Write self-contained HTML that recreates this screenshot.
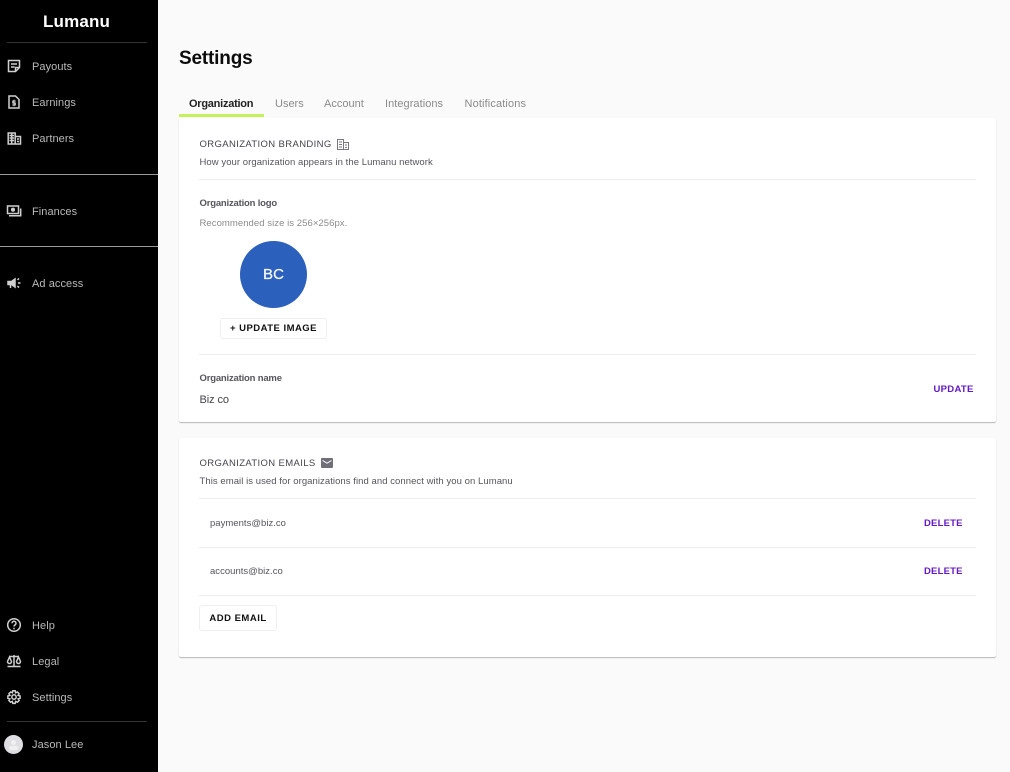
<!DOCTYPE html>
<html><head><meta charset="utf-8"><style>
html,body{margin:0;padding:0;width:1010px;height:772px;overflow:hidden;background:#fafafa}
body{position:relative;font-family:"Liberation Sans",sans-serif;color:#33333b}
.a{position:absolute;white-space:nowrap;line-height:16px}
.side{position:absolute;left:0;top:0;width:157.5px;height:772px;background:#000}
.nav{font-size:11px;color:#b9b9b9;left:32px;letter-spacing:.07px}
.hr{position:absolute;height:1px}
.ic{position:absolute;width:16px;height:16px;left:6px}
.ic *{fill:none;stroke:#cfcfcf;stroke-width:1.5}
.card{position:absolute;left:179px;width:817px;background:#fff;border-radius:2px;box-shadow:0 1px 1px rgba(0,0,0,.28)}
.tab{font-size:11px;color:#8b8b8b;top:96px;letter-spacing:.05px}
.h{font-size:9.5px;letter-spacing:.37px;color:#45454d}
.s{font-size:9.5px;letter-spacing:.06px;color:#55555c}
.l{font-size:9.5px;font-weight:bold;letter-spacing:-.19px;color:#55555c}
.d{position:absolute;height:1px;background:#eeeeee;left:199px;width:777px}
.p{font-size:9.5px;font-weight:bold;letter-spacing:.3px;color:#6319c4}
.btn{position:absolute;background:#fff;border:1px solid #efefef;border-radius:3px;box-sizing:border-box;text-align:center;font-size:9.5px;font-weight:bold;color:#111}
</style></head><body>
<div class="side"></div>
<div class="a" style="left:43px;top:14px;font-size:17px;font-weight:bold;color:#fff;letter-spacing:.15px">Lumanu</div>
<div class="hr" style="left:7px;top:42px;width:140px;background:#333"></div>

<svg class="ic" style="top:58px" viewBox="0 0 16 16"><path d="M2.500 2.500h11v7l-4 4h-7z"/><path d="M5 6h6M5 9h3.500M9.500 13.500V9.500h4"/></svg>
<div class="a nav" style="top:59px">Payouts</div>
<svg class="ic" style="top:94px" viewBox="0 0 16 16"><path d="M3 2h6.500L13 5.500V14H3z"/><path d="M9.800 7H6.800v2h2.500v2H6.200M8 5.800v6.400" style="stroke-width:1.100"/></svg>
<div class="a nav" style="top:95px">Earnings</div>
<svg class="ic" style="top:130px" viewBox="0 0 16 16"><path d="M2.200 3h7v11h-7zM9.200 6.500h5.300V14H9.200zM3.500 5.500h4.500M3.500 8h4.500M3.500 10.500h4.500M11 9h2M11 11.500h2M5.700 3v11"/></svg>
<div class="a nav" style="top:131px">Partners</div>
<div class="hr" style="left:0;top:174px;width:157.5px;background:#9a9a9a"></div>
<svg class="ic" style="top:203px" viewBox="0 0 16 16"><path d="M1.500 3h11v7.500h-11z"/><circle cx="7" cy="6.700" r="1.300" style="fill:#cfcfcf"/><path d="M14.700 5.500v7.300H3"/></svg>
<div class="a nav" style="top:204px">Finances</div>
<div class="hr" style="left:0;top:246px;width:157.5px;background:#9a9a9a"></div>
<svg class="ic" style="top:275px" viewBox="0 0 16 16"><path d="M2 6.500h3.500l3.500-2.500v8l-3.500-2.500H2zM4.500 10v3" style="fill:#cfcfcf"/><path d="M12 8h2.500M11.500 4.800l1.500-1.300M11.500 11.200l1.500 1.300"/></svg>
<div class="a nav" style="top:276px">Ad access</div>

<svg class="ic" style="top:617px" viewBox="0 0 16 16"><circle cx="8" cy="8" r="6.300"/><path d="M6 6.300c0-2.700 4-2.700 4 0 0 1.700-2 1.700-2 3.200M8 10.800v1.400"/></svg>
<div class="a nav" style="top:618px">Help</div>
<svg class="ic" style="top:653px" viewBox="0 0 16 16"><path d="M8 2v11M3 3.500h10M1.500 13.500h13M3.500 4l-2 4.500a2 2 0 0 0 4 0zM12.500 4l-2 4.500a2 2 0 0 0 4 0z"/></svg>
<div class="a nav" style="top:654px">Legal</div>
<svg class="ic" style="top:689px" viewBox="0 0 16 16"><circle cx="8" cy="8" r="2.200"/><path d="M6.800 1.800h2.400l.4 2 1.800-.8 1.700 1.700-1 1.700 2 .5v2.400l-2 .5 1 1.700-1.700 1.700-1.800-.8-.4 2H6.800l-.4-2-1.800.8-1.700-1.700 1-1.700-2-.5V6.900l2-.5-1-1.700 1.700-1.700 1.800.8z"/></svg>
<div class="a nav" style="top:690px">Settings</div>
<div class="hr" style="left:7px;top:721px;width:140px;background:#333"></div>
<div style="position:absolute;left:4px;top:735px;width:19px;height:19px;border-radius:50%;background:#dfdfe3;overflow:hidden"><div style="position:absolute;left:7px;top:5px;width:5px;height:5px;border-radius:50%;background:#f0f0f2"></div><div style="position:absolute;left:5px;top:11px;width:9px;height:4px;background:#f0f0f2;border-radius:2px"></div></div>
<div class="a nav" style="top:737px">Jason Lee</div>

<div class="a" style="left:179px;top:47px;font-size:19px;line-height:24px;font-weight:bold;color:#0c0c0c;letter-spacing:-.18px">Settings</div>
<div class="a tab" style="left:189px;color:#222;font-weight:bold;letter-spacing:-.25px">Organization</div>
<div class="hr" style="left:179px;top:114px;width:85px;height:3px;background:#c5f25a"></div>
<div class="a tab" style="left:275px;letter-spacing:0">Users</div>
<div class="a tab" style="left:324px;letter-spacing:0">Account</div>
<div class="a tab" style="left:385px">Integrations</div>
<div class="a tab" style="left:464.500px;letter-spacing:.13px">Notifications</div>

<div class="card" style="top:118px;height:304px"></div>
<div class="a h" style="left:199.500px;top:137px">ORGANIZATION BRANDING</div>
<svg style="position:absolute;left:337px;top:139px" width="12" height="11" viewBox="0 0 12 11" fill="none" stroke="#77777f" stroke-width="1"><path d="M.5.500h6v10h-6zM6.500 3.500h5v7h-5zM2 3h3M2 5.500h3M2 8h3M8 6h2M8 8.500h2"/></svg>
<div class="a s" style="left:199.500px;top:155px">How your organization appears in the Lumanu network</div>
<div class="d" style="top:179px"></div>
<div class="a l" style="left:199.500px;top:196px">Organization logo</div>
<div class="a s" style="left:199.500px;top:216px;color:#8c8c8c">Recommended size is 256×256px.</div>
<div style="position:absolute;left:240px;top:241px;width:67px;height:67px;border-radius:50%;background:#2b60bd;color:#f2f5fb;text-align:center;font-size:15px;line-height:67px;letter-spacing:.1px;-webkit-text-stroke:.3px #f2f5fb">BC</div>
<div class="btn" style="left:220px;top:318px;width:107px;height:21px;line-height:20px;letter-spacing:.47px">+ UPDATE IMAGE</div>
<div class="d" style="top:354px"></div>
<div class="a l" style="left:199.500px;top:371px">Organization name</div>
<div class="a" style="left:199.500px;top:392px;font-size:11px;color:#44444c;letter-spacing:-.08px">Biz co</div>
<div class="a p" style="left:933.500px;top:382px">UPDATE</div>

<div class="card" style="top:438px;height:219px"></div>
<div class="a h" style="left:199.500px;top:456px">ORGANIZATION EMAILS</div>
<svg style="position:absolute;left:321px;top:458px" width="12" height="10" viewBox="0 0 12 10"><rect width="12" height="10" rx="1" fill="#6f6f78"/><path d="M1.500 2.500L6 5.200l4.500-2.700" fill="none" stroke="#fff" stroke-width="1"/></svg>
<div class="a s" style="left:199.500px;top:474px">This email is used for organizations find and connect with you on Lumanu</div>
<div class="d" style="top:498px"></div>
<div class="a s" style="left:210px;top:516px;letter-spacing:.02px">payments@biz.co</div>
<div class="a p" style="left:924px;top:516px;letter-spacing:.2px">DELETE</div>
<div class="d" style="top:547px"></div>
<div class="a s" style="left:210px;top:564px;letter-spacing:.02px">accounts@biz.co</div>
<div class="a p" style="left:924px;top:564px;letter-spacing:.2px">DELETE</div>
<div class="d" style="top:595px"></div>
<div class="btn" style="left:199px;top:605px;width:78px;height:26px;line-height:25px;letter-spacing:.5px">ADD EMAIL</div>
</body></html>
